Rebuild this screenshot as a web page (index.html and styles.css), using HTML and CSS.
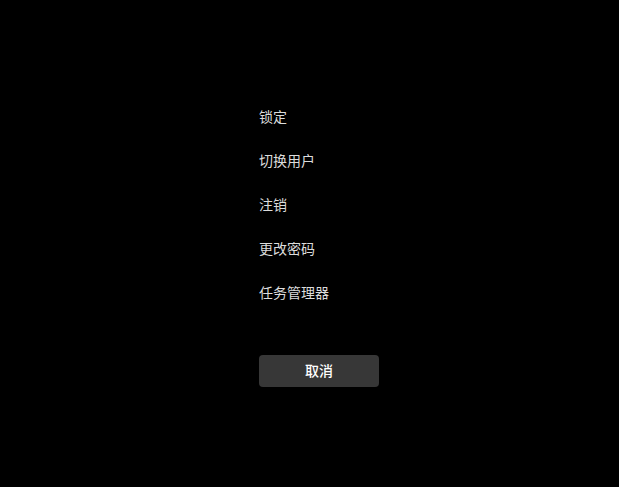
FILE: index.html
```html
<!DOCTYPE html>
<html lang="zh-CN">
<head>
<meta charset="utf-8">
<link rel="stylesheet" href="styles.css">
</head>
<body>
<main class="screen">
  <ul class="options">
    <li class="option">锁定</li>
    <li class="option">切换用户</li>
    <li class="option">注销</li>
    <li class="option">更改密码</li>
    <li class="option">任务管理器</li>
  </ul>
  <button class="cancel">取消</button>
</main>
</body>
</html>
```
FILE: styles.css
```css
html, body {
  margin: 0;
  padding: 0;
  background: #000;
  height: 100%;
}
.screen {
  display: flex;
  flex-direction: column;
  align-items: flex-start;
  padding: 106px 0 0 259px;
  font-family: "Noto Sans CJK SC", "Noto Sans", sans-serif;
}
.options {
  list-style: none;
  margin: 0;
  padding: 0;
  display: flex;
  flex-direction: column;
  gap: 24px;
}
.option {
  font-size: 14px;
  line-height: 20px;
  height: 20px;
  color: #dcdcdc;
}
.cancel {
  margin-top: 53px;
  width: 120px;
  height: 32px;
  border: none;
  border-radius: 4px;
  background: #373737;
  color: #fff;
  font-family: "Noto Sans CJK SC", "Noto Sans", sans-serif;
  font-size: 14px;
  line-height: 30px;
  font-weight: 500;
  padding: 0 0 2px;
}
```
